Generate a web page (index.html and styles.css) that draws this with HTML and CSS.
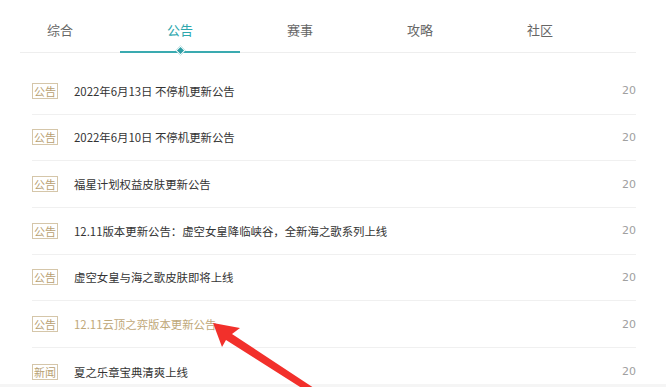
FILE: index.html
```html
<!DOCTYPE html>
<html lang="zh">
<head>
<meta charset="utf-8">
<link rel="stylesheet" href="styles.css">
</head>
<body>
<div class="page">
  <div class="nav">
    <div class="tabs">
      <div class="tab">综合</div>
      <div class="tab active">公告</div>
      <div class="tab">赛事</div>
      <div class="tab">攻略</div>
      <div class="tab">社区</div>
    </div>
  </div>
  <ul class="list">
    <li class="row"><span class="tag">公告</span><span class="title">2022年6月13日 不停机更新公告</span><span class="date">20</span></li>
    <li class="row"><span class="tag">公告</span><span class="title">2022年6月10日 不停机更新公告</span><span class="date">20</span></li>
    <li class="row"><span class="tag">公告</span><span class="title">福星计划权益皮肤更新公告</span><span class="date">20</span></li>
    <li class="row"><span class="tag">公告</span><span class="title">12.11版本更新公告：虚空女皇降临峡谷，全新海之歌系列上线</span><span class="date">20</span></li>
    <li class="row"><span class="tag">公告</span><span class="title">虚空女皇与海之歌皮肤即将上线</span><span class="date">20</span></li>
    <li class="row hl"><span class="tag">公告</span><span class="title">12.11云顶之弈版本更新公告</span><span class="date">20</span></li>
    <li class="row last"><span class="tag">新闻</span><span class="title">夏之乐章宝典清爽上线</span><span class="date">20</span></li>
  </ul>
  <div class="footer"></div>
  <svg class="arrow" width="666" height="387" viewBox="0 0 666 387">
    <polygon points="213,323 240,328 232,334 320,392 308,392 226,340 222,347" fill="#f2302b"/>
  </svg>
</div>
</body>
</html>
```

FILE: styles.css
```css
* { box-sizing: border-box; }
html, body { margin: 0; padding: 0; background: #fff; }
body { font-family: "Noto Sans CJK SC", "Noto Sans", sans-serif; width: 666px; height: 387px; overflow: hidden; }
.page { position: relative; width: 666px; height: 387px; overflow: hidden; }
.nav { margin: 0 30px 0 20px; border-bottom: 1px solid #eeeeee; height: 53px; }
.tabs { display: flex; margin-left: -20px; height: 52px; }
.tab { width: 120px; text-align: center; font-size: 13px; line-height: 20px; padding-top: 20px; color: #666; position: relative; }
.tab.active { color: #2ea7ad; }
.tab.active::after { content: ""; position: absolute; left: 0; right: 0; bottom: -1px; height: 2px; background: #3aaab0; }
.tab.active::before { content: ""; position: absolute; left: 57px; bottom: -2px; width: 5px; height: 5px; background: #2e9ea5; transform: rotate(45deg); border: 1px solid #fff; z-index: 1; }
.list { list-style: none; margin: 0 30px 0 32px; padding: 15px 0 0 0; }
.row { display: flex; align-items: center; height: 46.67px; border-bottom: 1px solid #f0f0f0; font-size: 11.4px; }
.row.last { border-bottom: none; height: 36px; padding-top: 12px; }
.tag { width: 26px; height: 16px; border: 1px solid #d5c6a9; color: #b89f72; font-size: 11px; line-height: 14px; text-align: center; flex: none; }
.title { margin-left: 16px; color: #333; flex: 1; }
.hl .title { color: #bfa879; }
.date { color: #a0a0a0; font-family: "DejaVu Sans", sans-serif; font-size: 11px; }
.footer { height: 10px; background: #f5f5f5; }
.arrow { position: absolute; left: 0; top: 0; }
```
